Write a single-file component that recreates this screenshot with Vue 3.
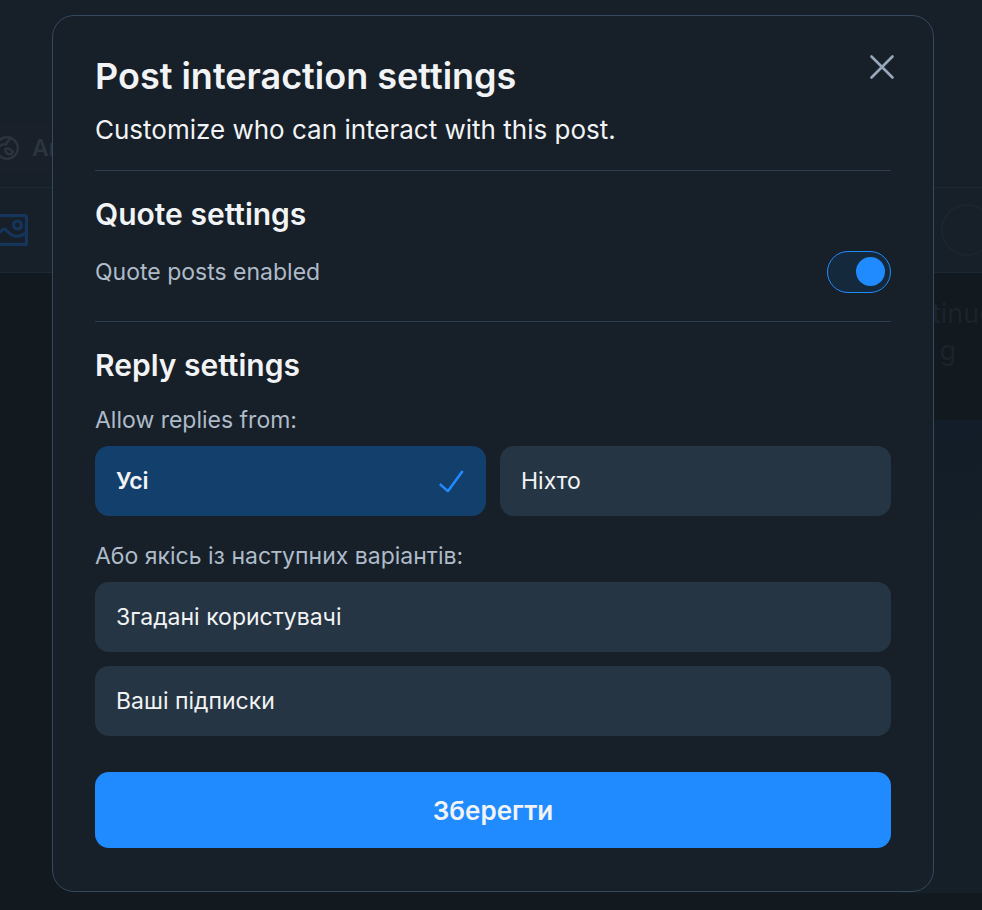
<script setup>
import { ref } from 'vue'

const quotes = ref(true)
const audience = ref('everyone')
const groups = ref([])

const audiences = [
  { id: 'everyone', label: 'Усі' },
  { id: 'nobody', label: 'Ніхто' },
]
const groupOptions = [
  { id: 'mentioned', label: 'Згадані користувачі' },
  { id: 'following', label: 'Ваші підписки' },
]
</script>

<template>
  <div class="page">
    <div class="backdrop" aria-hidden="true">
      <div class="audience-row">
        <div class="audience-chip">
          <svg class="globe" viewBox="0 0 24 24" fill="none" stroke="currentColor" stroke-width="2.2" stroke-linejoin="round">
            <circle cx="12" cy="12" r="10.8" />
            <path d="M2 9 4.5 10.5 7.5 8.3 11.5 8.3 12.5 5.5 14.5 4 14.3 1.6" />
            <path d="M10 13.2 13 12.2 15 13.6 18 15.5 16.5 18.2 13 18.2 11 16Z" />
          </svg>
          <span>An</span>
        </div>
      </div>
      <div class="toolbar">
        <svg class="image-icon" viewBox="0 0 34 32" fill="none" stroke="currentColor" stroke-width="3.2">
          <rect x="1.6" y="1.6" width="30.8" height="28.8" rx="1" />
          <circle cx="23.5" cy="11" r="4" />
          <path d="M1 22 9 15.5Q11 14.5 13 17C18 23 25 24 32 19" />
        </svg>
        <span class="counter"></span>
      </div>
      <div class="feed">
        <div class="feed-text">tinue<br />&nbsp;g</div>
        <div class="feed-card"></div>
      </div>
    </div>

    <form class="dialog" role="dialog" aria-labelledby="title" @submit.prevent>
      <header class="head">
        <div>
          <h1 id="title">Post interaction settings</h1>
          <p class="lead">Customize who can interact with this post.</p>
        </div>
        <button type="button" class="close" aria-label="Close">
          <svg viewBox="0 0 26 26" fill="none" stroke="currentColor" stroke-width="2.6" stroke-linecap="round">
            <path d="M2.5 2.5 23.5 23.5M23.5 2.5 2.5 23.5" />
          </svg>
        </button>
      </header>

      <section class="section quote">
        <h2>Quote settings</h2>
        <label class="switch-row">
          <span>Quote posts enabled</span>
          <input v-model="quotes" type="checkbox" role="switch" class="switch" />
        </label>
      </section>

      <section class="section">
        <h2>Reply settings</h2>
        <p id="from" class="hint first">Allow replies from:</p>
        <div class="pair" role="radiogroup" aria-labelledby="from">
          <label v-for="a in audiences" :key="a.id" class="option" :class="{ selected: audience === a.id }">
            <input v-model="audience" type="radio" name="audience" :value="a.id" class="native" />
            <span>{{ a.label }}</span>
            <svg v-if="audience === a.id" class="check" viewBox="0 0 24 22" fill="none" stroke="currentColor" stroke-width="2.4" stroke-linecap="square" stroke-linejoin="round">
              <path d="M1.7 14.2 8.5 20.3 22 1.8" />
            </svg>
          </label>
        </div>
        <p id="groups" class="hint second">Або якісь із наступних варіантів:</p>
        <div class="stack" role="group" aria-labelledby="groups">
          <label v-for="g in groupOptions" :key="g.id" class="option" :class="{ selected: groups.includes(g.id) }">
            <input v-model="groups" type="checkbox" :value="g.id" class="native" />
            <span>{{ g.label }}</span>
          </label>
        </div>
      </section>

      <button type="submit" class="save">Зберегти</button>
    </form>
  </div>
</template>

<style>
body {
  margin: 0;
  background: #12191f;
}
</style>

<style scoped>
.page {
  position: relative;
  box-sizing: border-box;
  min-height: 100vh;
  padding: 15px 48px 18px 52px;
  overflow: hidden;
  font-family: Inter, sans-serif;
  color: #f1f3f5;
}
.backdrop {
  position: absolute;
  inset: 0;
  display: flex;
  flex-direction: column;
  overflow: hidden;
}
.audience-row {
  box-sizing: border-box;
  height: 187px;
  padding-top: 123px;
  background: #171f28;
}
.audience-chip {
  display: flex;
  align-items: center;
  gap: 13px;
  width: 300px;
  height: 50px;
  margin-left: -5px;
  background: #19202a;
  color: #2c343f;
  font-size: 23px;
  font-weight: 600;
}
.globe {
  width: 24px;
  height: 24px;
}
.toolbar {
  display: flex;
  align-items: center;
  justify-content: space-between;
  height: 84px;
  border-top: 1px solid #1c2a35;
  border-bottom: 1px solid #1c2a35;
  background: #171f28;
}
.image-icon {
  width: 34px;
  height: 32px;
  margin-left: -6px;
  color: #15355a;
}
.counter {
  box-sizing: border-box;
  width: 52px;
  height: 52px;
  margin-right: -11px;
  border: 2px solid #1a252f;
  border-radius: 50%;
}
.feed {
  display: flex;
  flex: 1;
  flex-direction: column;
  align-items: flex-end;
  padding-bottom: 17px;
}
.feed-text {
  width: 50px;
  height: 125px;
  padding-top: 22px;
  color: #1c232b;
  font-size: 27px;
  line-height: 37px;
}
.feed-card {
  flex: 1;
  width: 82px;
  background: linear-gradient(#131d29, #151f28 25%);
}
.dialog {
  position: relative;
  box-sizing: border-box;
  padding: 35px 42px 43px;
  border: 1px solid #344960;
  border-radius: 22px;
  background: #171f28;
}
h1,
h2,
p {
  margin: 0;
  font-weight: 400;
}
.head {
  display: flex;
  align-items: flex-start;
  justify-content: space-between;
  padding-bottom: 22px;
}
h1 {
  font-size: 36px;
  font-weight: 600;
  line-height: 50px;
}
.lead {
  padding-top: 11px;
  font-size: 26px;
  line-height: 36px;
}
.close {
  display: grid;
  place-items: center;
  width: 58px;
  height: 58px;
  margin: -13px -20px 0 0;
  padding: 0;
  border: 0;
  border-radius: 50%;
  background: none;
  color: #97a8ba;
}
.close svg {
  width: 26px;
  height: 26px;
}
.section {
  border-top: 1px solid #2b3d4e;
  padding-top: 23px;
}
.quote {
  padding-bottom: 28px;
}
h2 {
  font-size: 30px;
  font-weight: 600;
  line-height: 40px;
}
.switch-row {
  display: flex;
  align-items: center;
  justify-content: space-between;
  padding-top: 17px;
  color: #aebbc9;
  font-size: 23px;
  line-height: 32px;
}
.switch {
  display: flex;
  align-items: center;
  box-sizing: border-box;
  width: 64px;
  height: 42px;
  margin: 0;
  padding: 0 5px 2px;
  border: 1px solid #208bfe;
  border-radius: 21px;
  background: #15293d;
  appearance: none;
}
.switch::before {
  width: 29px;
  height: 29px;
  border-radius: 50%;
  background: #208bfe;
  content: '';
}
.switch:checked {
  justify-content: flex-end;
}
.hint {
  color: #aebbc9;
  font-size: 23px;
  line-height: 32px;
}
.first {
  padding: 19px 0 10px;
}
.second {
  padding: 24px 0 10px;
}
.pair {
  display: grid;
  grid-template-columns: 1fr 1fr;
  gap: 14px;
}
.stack {
  display: grid;
  gap: 14px;
}
.option {
  display: flex;
  align-items: center;
  justify-content: space-between;
  height: 70px;
  padding: 0 22px 0 21px;
  border-radius: 14px;
  background: #263543;
  font-size: 23px;
}
.selected {
  background: #133f6c;
  font-weight: 600;
}
.native {
  position: absolute;
  opacity: 0;
  pointer-events: none;
}
.check {
  width: 25px;
  height: 23px;
  color: #208bfe;
}
.save {
  display: block;
  width: 100%;
  height: 76px;
  margin-top: 36px;
  border: 0;
  border-radius: 14px;
  background: #208bfe;
  color: #f1f3f5;
  font: 600 26px Inter, sans-serif;
}
</style>
